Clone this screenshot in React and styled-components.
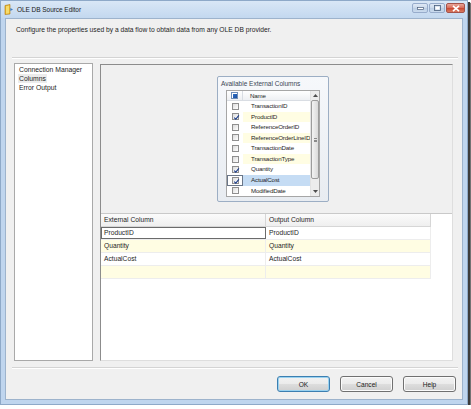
import React from 'react';
import styled, { createGlobalStyle } from 'styled-components';

const Global = createGlobalStyle`
  html, body { margin: 0; padding: 0; background: #ffffff; }
  body { font-family: "Liberation Sans", Arial, sans-serif; color: #1e1e1e; }
  * { box-sizing: border-box; }
`;

const Window = styled.div`
  width: 468px;
  height: 405px;
  background: #bfd5ee;
  border: 1px solid #8ea9c8;
  box-shadow: 2px 2px 0 #3c3c3c, 3px 3px 1px rgba(0,0,0,0.55);
  display: flex;
  flex-direction: column;
`;

const TitleBar = styled.div`
  height: 17px;
  display: flex;
  align-items: center;
  padding-left: 3px;
  padding-right: 2px;
  gap: 3px;
  background: linear-gradient(#d9e7f6, #c3d8ef);
`;

const TitleText = styled.span`
  font-size: 6.5px;
  color: #1a1a1a;
  flex: 1;
  letter-spacing: -0.05px;
`;

const CtrlGroup = styled.div`
  display: flex;
  gap: 1px;
  align-self: flex-start;
  margin-top: 2px;
`;

const CtrlBtn = styled.div`
  width: ${p => (p.$close ? 19 : 16)}px;
  height: 10px;
  border: 1px solid ${p => (p.$close ? '#a4524a' : '#97accb')};
  border-radius: 2px;
  background: ${p =>
    p.$close
      ? 'linear-gradient(#e9a597, #d86a58 50%, #c9452f 51%, #d97c63)'
      : 'linear-gradient(#dfe9f5, #c9d8ea 50%, #bacde3 51%, #cadbee)'};
  display: flex;
  align-items: center;
  justify-content: center;
`;

const Client = styled.div`
  flex: 1;
  margin: 0 4px 4px 4px;
  background: #f0f0f0;
  border: 1px solid #9db3cc;
  display: flex;
  flex-direction: column;
`;

const Description = styled.div`
  height: 38px;
  padding: 6px 0 0 10px;
  font-size: 6.7px;
  line-height: 9px;
`;

const Separator = styled.div`
  height: 2px;
  margin: 0 4px 0 6px;
  border-top: 1px solid #d4d4d4;
  border-bottom: 1px solid #ffffff;
`;

const Body = styled.div`
  height: 298px;
  margin-top: 4px;
  padding: 0 9px 0 8px;
  display: flex;
  gap: 7px;
`;

const NavList = styled.div`
  width: 79px;
  background: #ffffff;
  border: 1px solid #a9a9a9;
  padding: 1px 0 0 3px;
  display: flex;
  flex-direction: column;
  align-items: flex-start;
`;

const NavItem = styled.div`
  font-size: 6.8px;
  line-height: 9px;
  padding: 0 1px;
  background: ${p => (p.$active ? '#ececec' : 'transparent')};
`;

const RightPanel = styled.div`
  flex: 1;
  border-top: 1px solid #8c8c8c;
  border-left: 1px solid #8c8c8c;
  border-right: 1px solid #dedede;
  border-bottom: 1px solid #dedede;
  box-shadow: inset 1px 1px 0 #c8c8c8;
  display: flex;
  flex-direction: column;
  margin-top: 1px;
`;

const Canvas = styled.div`
  height: 148px;
  padding: 11px 0 0 116px;
  background: #f0f0f0;
`;

const AvailBox = styled.div`
  width: 112px;
  height: 126px;
  border: 1px solid #9caec4;
  border-radius: 2px;
  background: linear-gradient(#f6f8fb, #e8ecf1);
  padding: 0 8px 0 8px;
  display: flex;
  flex-direction: column;
`;

const AvailTitle = styled.div`
  height: 13px;
  font-size: 6.5px;
  line-height: 14px;
  color: #3b4654;
  margin-left: -5px;
  white-space: nowrap;
`;

const ListFrame = styled.div`
  width: 94px;
  height: 107px;
  border: 1px solid #a6a6a6;
  background: #ffffff;
  display: flex;
`;

const ListBody = styled.div`
  flex: 1;
  display: flex;
  flex-direction: column;
`;

const ListRow = styled.div`
  height: ${p => (p.$header ? 10 : 10.62)}px;
  display: grid;
  grid-template-columns: 16px 1fr;
  background: ${p => (p.$header ? 'linear-gradient(#ffffff, #eef0f3)' : '#ffffff')};
  border-bottom: ${p => (p.$header ? '1px solid #d9dde3' : 'none')};
`;

const CheckCell = styled.div`
  display: flex;
  align-items: center;
  justify-content: center;
  border-right: ${p => (p.$header ? '1px solid #d9dde3' : 'none')};
  outline: ${p => (p.$focus ? '1px solid #6a7688' : 'none')};
  outline-offset: -1px;
`;

const NameCell = styled.div`
  font-size: 6.2px;
  line-height: 10px;
  padding-left: ${p => (p.$header ? 7 : 8)}px;
  white-space: nowrap;
  overflow: hidden;
  letter-spacing: -0.15px;
  background: ${p => (p.$selected ? '#c5dcf4' : p.$alt ? '#fffde3' : 'transparent')};
`;

const Check = styled.div`
  width: 7px;
  height: 7px;
  border: 1px solid ${p => (p.$mixed ? '#6f8fb9' : '#8f8f8f')};
  background: ${p => (p.$mixed ? '#ffffff' : 'linear-gradient(135deg, #dcdcdc, #ffffff)')};
  display: flex;
  align-items: center;
  justify-content: center;
  position: relative;
`;

const Mixed = styled.div`
  width: 4px;
  height: 4px;
  background: linear-gradient(135deg, #2d6fc8, #1c4f9d);
`;

const Scrollbar = styled.div`
  width: 9px;
  background: #ececec;
  border-left: 1px solid #e2e2e2;
  display: flex;
  flex-direction: column;
  align-items: center;
`;

const ScrollArrow = styled.div`
  height: 9px;
  width: 8px;
  display: flex;
  align-items: center;
  justify-content: center;
`;

const Thumb = styled.div`
  width: 8px;
  height: 79px;
  margin-bottom: auto;
  border: 1px solid #9c9c9c;
  border-radius: 2px;
  background: linear-gradient(90deg, #f3f3f3, #dadada);
  display: flex;
  align-items: center;
  justify-content: center;
`;

const Grip = styled.div`
  width: 3px;
  height: 4px;
  border-top: 1px solid #8a8a8a;
  border-bottom: 1px solid #8a8a8a;
  position: relative;
  &::after {
    content: '';
    position: absolute;
    left: 0;
    right: 0;
    top: 1px;
    border-top: 1px solid #8a8a8a;
  }
`;

const GridArea = styled.div`
  flex: 1;
  background: #ffffff;
  border-top: 1px solid #c9c9c9;
`;

const GridRow = styled.div`
  display: grid;
  grid-template-columns: 165px 165px;
  height: 13px;
  background: ${p => (p.$header ? 'linear-gradient(#fbfbfb, #efefef)' : p.$alt ? '#fffde3' : '#ffffff')};
  border-bottom: 1px solid ${p => (p.$header ? '#d6d6d6' : '#ededed')};
  width: 330px;
`;

const GridCell = styled.div`
  font-size: 6.7px;
  line-height: 12px;
  padding-left: 3px;
  white-space: nowrap;
  border-right: 1px solid ${p => (p.$header ? '#d6d6d6' : '#ededed')};
  outline: ${p => (p.$focus ? '1px solid #6b6b6b' : 'none')};
  outline-offset: -1px;
  background: ${p => (p.$focus ? '#ffffff' : 'transparent')};
`;

const ButtonRow = styled.div`
  display: flex;
  justify-content: flex-end;
  gap: 10px;
  margin-top: 7px;
  padding-right: 6px;
`;

const Button = styled.div`
  width: 53px;
  height: 16px;
  border: 1px solid ${p => (p.$default ? '#3c7fb1' : '#707070')};
  border-radius: 3px;
  background: linear-gradient(#f2f2f2, #ebebeb 48%, #dddddd 52%, #cfcfcf);
  box-shadow: ${p => (p.$default ? 'inset 0 0 0 1px #9ad2f0' : 'inset 0 0 0 1px #fbfbfb')};
  font-size: 6.6px;
  display: flex;
  align-items: center;
  justify-content: center;
  color: #1a1a1a;
`;

const CheckMark = () => (
  <svg width="7" height="7" viewBox="0 0 7 7" style={{ position: 'absolute', left: 0, top: 0 }}>
    <path d="M1.2 3.6 L2.8 5.2 L5.9 1.4" fill="none" stroke="#1f3f8a" strokeWidth="1.1" />
  </svg>
);

const AppIcon = () => (
  <svg width="10" height="11" viewBox="0 0 10 11">
    <path d="M1 1.5 L6 0.5 L6 10 L1 10.5 Z" fill="#e9b52c" stroke="#b07a10" strokeWidth="0.6" />
    <path d="M2 2.2 L5.2 1.6 L5.2 9.3 L2 9.7 Z" fill="#f7dc6a" />
    <path d="M6.3 4 L9 5.5 L6.3 7 Z" fill="#3f7fc4" />
  </svg>
);

const availItems = [
  { name: 'TransactionID' },
  { name: 'ProductID', checked: true, alt: true },
  { name: 'ReferenceOrderID' },
  { name: 'ReferenceOrderLineID', alt: true },
  { name: 'TransactionDate' },
  { name: 'TransactionType', alt: true },
  { name: 'Quantity', checked: true },
  { name: 'ActualCost', checked: true, selected: true },
  { name: 'ModifiedDate' },
];

const gridRows = [
  ['ProductID', 'ProductID'],
  ['Quantity', 'Quantity'],
  ['ActualCost', 'ActualCost'],
  ['', ''],
];

export default function App() {
  return (
    <>
      <Global />
      <Window>
        <TitleBar>
          <AppIcon />
          <TitleText>OLE DB Source Editor</TitleText>
          <CtrlGroup>
            <CtrlBtn>
              <svg width="7" height="3" viewBox="0 0 7 3">
                <rect x="0.5" y="0.5" width="6" height="2" fill="#ffffff" stroke="#4a5f7c" strokeWidth="0.7" />
              </svg>
            </CtrlBtn>
            <CtrlBtn>
              <svg width="7" height="6" viewBox="0 0 7 6">
                <rect x="0.5" y="0.5" width="6" height="5" fill="none" stroke="#4a5f7c" strokeWidth="0.8" />
                <rect x="1.5" y="1.8" width="4" height="2.7" fill="#ffffff" />
              </svg>
            </CtrlBtn>
            <CtrlBtn $close>
              <svg width="8" height="7" viewBox="0 0 8 7">
                <path d="M1 0.8 L7 6.2 M7 0.8 L1 6.2" stroke="#ffffff" strokeWidth="1.6" />
              </svg>
            </CtrlBtn>
          </CtrlGroup>
        </TitleBar>
        <Client>
          <Description>
            Configure the properties used by a data flow to obtain data from any OLE DB provider.
          </Description>
          <Separator />
          <Body>
            <NavList>
              <NavItem>Connection Manager</NavItem>
              <NavItem $active>Columns</NavItem>
              <NavItem>Error Output</NavItem>
            </NavList>
            <RightPanel>
              <Canvas>
                <AvailBox>
                  <AvailTitle>Available External Columns</AvailTitle>
                  <ListFrame>
                    <ListBody>
                      <ListRow $header>
                        <CheckCell $header>
                          <Check $mixed>
                            <Mixed />
                          </Check>
                        </CheckCell>
                        <NameCell $header>Name</NameCell>
                      </ListRow>
                      {availItems.map(it => (
                        <ListRow key={it.name}>
                          <CheckCell $focus={it.selected}>
                            <Check>{it.checked && <CheckMark />}</Check>
                          </CheckCell>
                          <NameCell $alt={it.alt} $selected={it.selected}>
                            {it.name}
                          </NameCell>
                        </ListRow>
                      ))}
                    </ListBody>
                    <Scrollbar>
                      <ScrollArrow>
                        <svg width="5" height="3" viewBox="0 0 5 3">
                          <path d="M0 3 L2.5 0 L5 3 Z" fill="#4d4d4d" />
                        </svg>
                      </ScrollArrow>
                      <Thumb>
                        <Grip />
                      </Thumb>
                      <ScrollArrow>
                        <svg width="5" height="3" viewBox="0 0 5 3">
                          <path d="M0 0 L2.5 3 L5 0 Z" fill="#4d4d4d" />
                        </svg>
                      </ScrollArrow>
                    </Scrollbar>
                  </ListFrame>
                </AvailBox>
              </Canvas>
              <GridArea>
                <GridRow $header>
                  <GridCell $header>External Column</GridCell>
                  <GridCell $header>Output Column</GridCell>
                </GridRow>
                {gridRows.map((r, i) => (
                  <GridRow key={i} $alt={i % 2 === 1}>
                    <GridCell $focus={i === 0}>{r[0]}</GridCell>
                    <GridCell>{r[1]}</GridCell>
                  </GridRow>
                ))}
              </GridArea>
            </RightPanel>
          </Body>
          <Separator style={{ marginTop: 6 }} />
          <ButtonRow>
            <Button $default>OK</Button>
            <Button>Cancel</Button>
            <Button>Help</Button>
          </ButtonRow>
        </Client>
      </Window>
    </>
  );
}
